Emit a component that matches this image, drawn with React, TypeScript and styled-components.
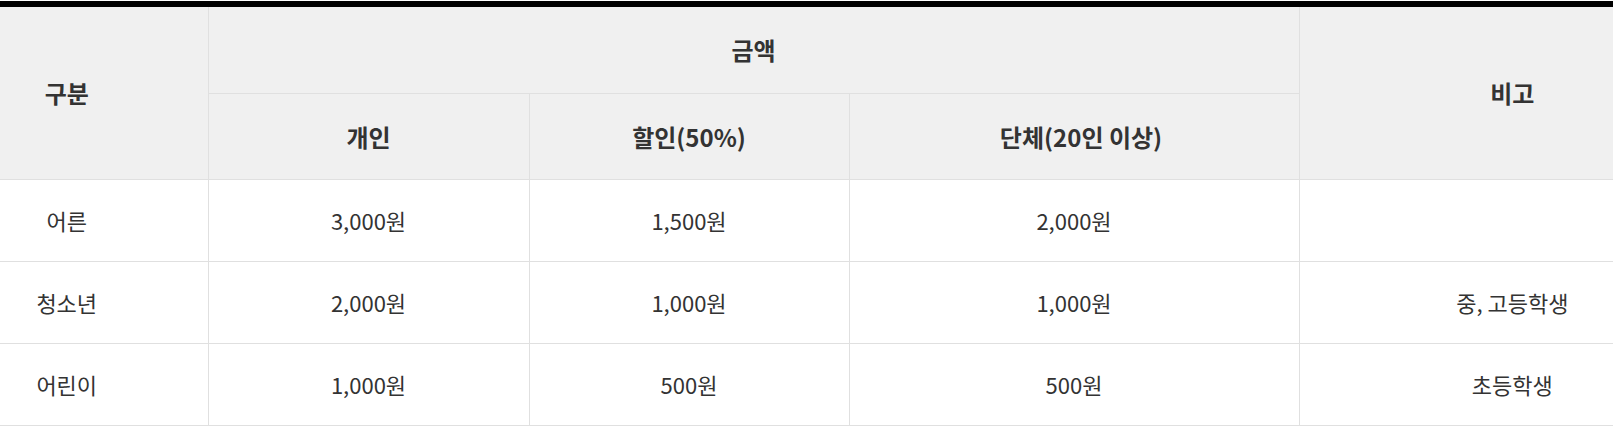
import React from 'react'
import styled, {createGlobalStyle} from "styled-components";

const GlobalStyle = createGlobalStyle`
  html, body {
    margin: 0;
    padding: 0;
    background: #fff;
  }
  body {
    font-family: "Noto Sans CJK KR", "Noto Sans", sans-serif;
    color: #333;
  }
`;

const StyledWrap = styled.div`
  margin-top: 1px;
  border-top: 6px solid #000;
`

const StyledTable = styled.table`
  width: 100%;
  border-collapse: collapse;
  table-layout: fixed;
`;

const StyledHeadRow = styled.tr<{ $h: number }>`
  height: ${p => p.$h}px;
`;

const StyledHead = styled.th<{ $padL?: number, $padR?: number }>`
  padding: 0 ${p => p.$padR || 0}px 0 ${p => p.$padL || 0}px;
  background-color: #f0f0f0;
  border: 1px solid #e0e0e0;
  border-top: none;
  font-size: 24px;
  font-weight: 700;
  color: #333;
  text-align: center;
  vertical-align: middle;
  &:first-child { border-left: none; }
  &:last-child { border-right: none; }
`;

const StyledCell = styled.td<{ $padL?: number, $padR?: number }>`
  height: 81px;
  padding: 0 ${p => p.$padR || 0}px 0 ${p => p.$padL || 0}px;
  border: 1px solid #e0e0e0;
  font-size: 22px;
  color: #333;
  text-align: center;
  vertical-align: middle;
  &:first-child { border-left: none; }
  &:last-child { border-right: none; }
`;

interface Row {
    label: string,
    single: string,
    discount: string,
    group: string,
    note: string
}

const rows: Row[] = [
    {label: "어른", single: "3,000원", discount: "1,500원", group: "2,000원", note: ""},
    {label: "청소년", single: "2,000원", discount: "1,000원", group: "1,000원", note: "중, 고등학생"},
    {label: "어린이", single: "1,000원", discount: "500원", group: "500원", note: "초등학생"},
];

export default function App() {
    return (
        <>
            <GlobalStyle/>
            <StyledWrap>
                <StyledTable>
                    <colgroup>
                        <col style={{width: 208}}/>
                        <col style={{width: 321}}/>
                        <col style={{width: 320}}/>
                        <col style={{width: 450}}/>
                        <col/>
                    </colgroup>
                    <thead>
                    <StyledHeadRow $h={86}>
                        <StyledHead rowSpan={2} $padR={74}>구분</StyledHead>
                        <StyledHead colSpan={3}>금액</StyledHead>
                        <StyledHead rowSpan={2} $padL={112}>비고</StyledHead>
                    </StyledHeadRow>
                    <StyledHeadRow $h={86}>
                        <StyledHead>개인</StyledHead>
                        <StyledHead>할인(50%)</StyledHead>
                        <StyledHead $padL={14}>단체(20인 이상)</StyledHead>
                    </StyledHeadRow>
                    </thead>
                    <tbody>
                    {rows.map(row => (
                        <tr key={row.label}>
                            <StyledCell $padR={74}>{row.label}</StyledCell>
                            <StyledCell>{row.single}</StyledCell>
                            <StyledCell>{row.discount}</StyledCell>
                            <StyledCell>{row.group}</StyledCell>
                            <StyledCell $padL={112}>{row.note}</StyledCell>
                        </tr>
                    ))}
                    </tbody>
                </StyledTable>
            </StyledWrap>
        </>
    )
}
